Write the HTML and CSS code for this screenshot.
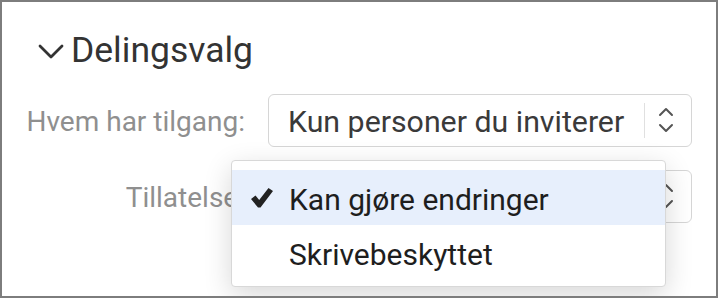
FILE: index.html
```html
<!DOCTYPE html>
<html lang="no">
<head>
<meta charset="utf-8">
<link rel="stylesheet" href="styles.css">
</head>
<body>
<div class="panel">
  <div class="heading">
    <svg class="disclosure" width="28" height="20" viewBox="0 0 28 20"><path d="M3 4 L14 15 L25 4" fill="none" stroke="#333" stroke-width="2.8" stroke-linecap="round" stroke-linejoin="round"/></svg>
    <span class="heading-text">Delingsvalg</span>
  </div>
  <div class="form">
    <div class="label">Hvem har tilgang:</div>
    <div class="select">
      <span class="select-text">Kun personer du inviterer</span>
      <span class="sep"></span>
      <svg class="updown" width="16" height="28" viewBox="0 0 16 28"><path d="M2 9 L8 3 L14 9 M2 19 L8 25 L14 19" fill="none" stroke="#555" stroke-width="2" stroke-linecap="round" stroke-linejoin="round"/></svg>
    </div>
    <div class="label">Tillatelse:</div>
    <div class="select">
      <span class="select-text covered"></span>
      <span class="sep"></span>
      <svg class="updown" width="16" height="28" viewBox="0 0 16 28"><path d="M2 9 L8 3 L14 9 M2 19 L8 25 L14 19" fill="none" stroke="#555" stroke-width="2" stroke-linecap="round" stroke-linejoin="round"/></svg>
      <div class="menu">
        <div class="item selected">
          <svg class="check" width="22" height="20" viewBox="0 0 22 20"><path d="M0 11 L4.5 7.5 L8.2 12 L17.5 0 L22 3 L9.5 19.5 L7 19.5 Z" fill="#222"/></svg>
          <span>Kan gjøre endringer</span>
        </div>
        <div class="item">
          <span>Skrivebeskyttet</span>
        </div>
      </div>
    </div>
  </div>
</div>
</body>
</html>
```
FILE: styles.css
```css
html, body {
  margin: 0;
  padding: 0;
  background: #fff;
}
.panel {
  width: 718px;
  height: 298px;
  box-sizing: border-box;
  border: 2px solid #7d7d7d;
  font-family: Roboto, "Liberation Sans", sans-serif;
  overflow: hidden;
}
.heading {
  display: flex;
  align-items: center;
  padding-top: 28px;
  padding-left: 35px;
  height: 40px;
  box-sizing: content-box;
}
.disclosure {
  margin-top: 3px;
}
.heading-text {
  margin-left: 6px;
  font-size: 35.5px;
  line-height: 40px;
  color: #333;
}
.form {
  margin-top: 24px;
  display: grid;
  grid-template-columns: 243px 424px;
  column-gap: 23px;
  row-gap: 23px;
  align-items: center;
}
.label {
  text-align: right;
  font-size: 28px;
  color: #8f8f8f;
  padding-top: 2px;
}
.select {
  position: relative;
  height: 53px;
  box-sizing: border-box;
  border: 1px solid #d6d6d6;
  border-radius: 6px;
  display: flex;
  align-items: center;
  padding-left: 19px;
  padding-top: 2px;
  background: #fff;
}
.select-text {
  flex: 1;
  font-size: 30.3px;
  color: #3a3a3a;
  white-space: nowrap;
}
.sep {
  width: 1px;
  height: 35px;
  background: #e0e0e0;
  margin-right: 13px;
  margin-top: -2px;
}
.updown {
  margin-right: 17px;
  margin-top: -3px;
}
.menu {
  position: absolute;
  left: -38px;
  top: -11px;
  width: 435px;
  height: 127px;
  box-sizing: border-box;
  padding: 9px 0;
  background: #fff;
  border: 1px solid #d8d8d8;
  border-radius: 4px;
  box-shadow: 0 8px 28px rgba(0, 0, 0, 0.16);
}
.item {
  height: 55px;
  box-sizing: border-box;
  padding-top: 4px;
  padding-left: 57px;
  line-height: 51px;
  font-size: 30px;
  color: #1e1e1e;
  position: relative;
  white-space: nowrap;
}
.item.selected {
  background: #e7effc;
}
.check {
  position: absolute;
  left: 19px;
  top: 18px;
}
```
